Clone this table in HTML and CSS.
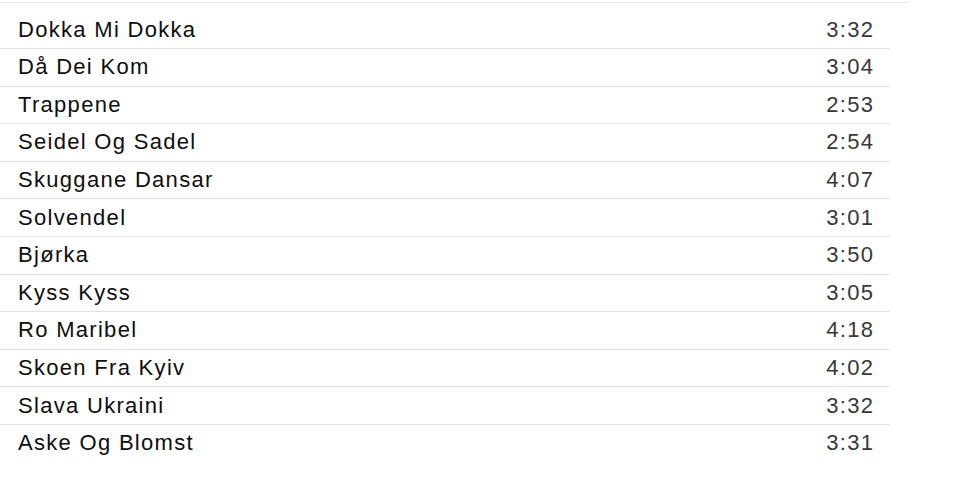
FILE: index.html
```html
<!DOCTYPE html>
<html lang="no">
<head>
<meta charset="utf-8">
<title>Tracks</title>
<link rel="stylesheet" href="styles.css">
</head>
<body>
<div class="panel">
  <ul class="tracks">
    <li class="track"><span class="title">Dokka Mi Dokka</span><span class="time">3:32</span></li>
    <li class="track"><span class="title">Då Dei Kom</span><span class="time">3:04</span></li>
    <li class="track"><span class="title">Trappene</span><span class="time">2:53</span></li>
    <li class="track"><span class="title">Seidel Og Sadel</span><span class="time">2:54</span></li>
    <li class="track"><span class="title">Skuggane Dansar</span><span class="time">4:07</span></li>
    <li class="track"><span class="title">Solvendel</span><span class="time">3:01</span></li>
    <li class="track"><span class="title">Bjørka</span><span class="time">3:50</span></li>
    <li class="track"><span class="title">Kyss Kyss</span><span class="time">3:05</span></li>
    <li class="track"><span class="title">Ro Maribel</span><span class="time">4:18</span></li>
    <li class="track"><span class="title">Skoen Fra Kyiv</span><span class="time">4:02</span></li>
    <li class="track"><span class="title">Slava Ukraini</span><span class="time">3:32</span></li>
    <li class="track"><span class="title">Aske Og Blomst</span><span class="time">3:31</span></li>
  </ul>
</div>
</body>
</html>
```

FILE: styles.css
```css
html, body {
  margin: 0;
  padding: 0;
  background: #ffffff;
}

body {
  font-family: "Liberation Sans", Arial, Helvetica, sans-serif;
}

.panel {
  width: 908px;
  margin-top: 2px;
  border-top: 1px solid #e6e6e6;
  padding-top: 8.4px;
}

.tracks {
  list-style: none;
  margin: 0;
  padding: 0;
  width: 890px;
}

.track {
  display: flex;
  align-items: center;
  justify-content: space-between;
  height: 36.6px;
  padding: 0 17px 0 18px;
  border-bottom: 1px solid #e2e2e2;
  font-size: 22px;
  letter-spacing: 1.3px;
}

.track:last-child {
  border-bottom: none;
}

.title {
  color: #0e0e0e;
}

.time {
  color: #383838;
  margin-right: -1.3px;
}
```
